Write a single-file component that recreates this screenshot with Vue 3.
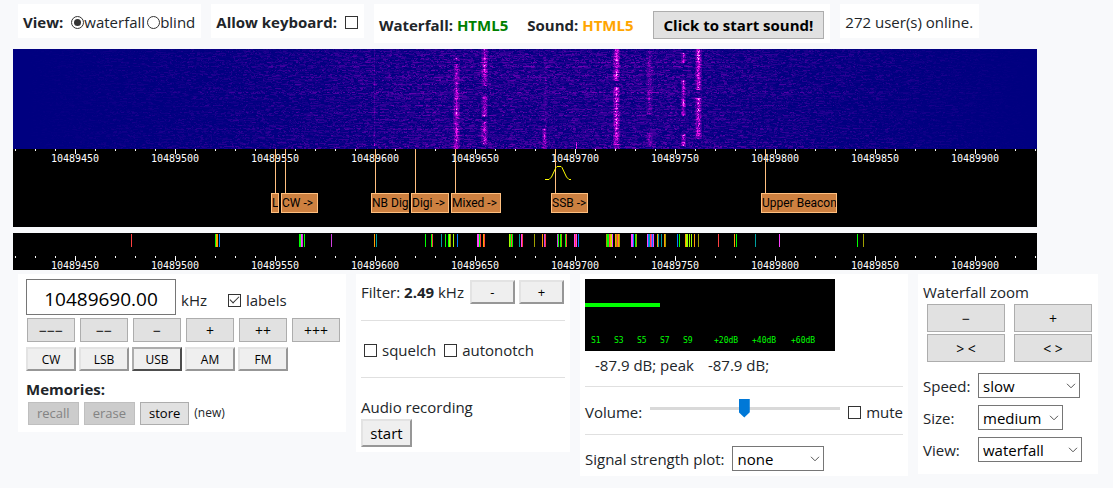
<script setup>
import { onMounted, ref } from 'vue'

const SPAN = 1024
const HEIGHT = 100
const percent = (x) => (x / SPAN) * 100 + '%'

const majorTicks = Array.from({ length: 10 }, (_, i) => ({ x: 62 + i * 100, text: String(10489450 + i * 50) }))
const minorTicks = Array.from({ length: 52 }, (_, i) => 2 + i * 20).filter((x) => x < SPAN && (x - 62) % 100 !== 0)

const bandLabels = [
  { text: 'L', x: 258, width: 8, line: 262 },
  { text: 'CW ->', x: 268, width: 37, line: 272 },
  { text: 'NB Dig', x: 358, width: 38, line: 362, cut: true },
  { text: 'Digi ->', x: 398, width: 38, line: 402 },
  { text: 'Mixed ->', x: 438, width: 50, line: 442 },
  { text: 'SSB ->', x: 538, width: 37, line: 542 },
  { text: 'Upper Beacon', x: 748, width: 76, line: 752 },
]

const palette = {
  r: '#ff4040', o: '#ffa000', g: '#00ff00', l: '#a0ff00', t: '#00a0a0',
  b: '#0080ff', m: '#ff40ff', p: '#d040e0', v: '#a0a000',
}
const listeners = (
  '118r 202g 203o 204o 206b 286g 287g 288m 289p 291g 318p 361o 363t ' +
  '412g 418g 419r 428t 432g 435g 436l 437v 440l 444b 464m 465m 466g 467r 470o 471r ' +
  '496l 497g 498r 499g 506t 508m 509r 521v 529o 531p 532r 544p 545g 547g 548v 552g 553r ' +
  '561m 562r 563m 565b 593v 594g 595g 596r 597o 598l 599m 602o 603v 604r 605o 606v ' +
  '618m 619m 620b 622g 623v 634m 635b 636t 637r 638p 639b 640m 644o 645t 648t 651o 652v ' +
  '664b 666g 672o 673l 674l 676l 678l 681o 685v 705r 721o 723g 742t 766m 844g 850v'
).split(' ').map((s) => ({ x: parseInt(s), color: palette[s.slice(-1)] }))

const meterMarks = [
  { text: 'S1', x: 6 }, { text: 'S3', x: 29 }, { text: 'S5', x: 52 }, { text: 'S7', x: 75 }, { text: 'S9', x: 98 },
  { text: '+20dB', x: 129 }, { text: '+40dB', x: 167 }, { text: '+60dB', x: 206 },
]

const signals = [
  { x: 443, width: 3, power: 0.5, spans: [[9, 12], [15, 100]] },
  { x: 471, width: 3, power: 0.55, spans: [[0, 37], [47, 68], [72, 96]] },
  { x: 531, width: 2, power: 0.5, spans: [[80, 100]] },
  { x: 532, width: 2, power: 0.12, spans: [[6, 80]] },
  { x: 563, width: 0, power: 0.6, spans: [[93, 100]] },
  { x: 361, width: 0, power: 0.14, spans: [[0, 93]] },
  { x: 361, width: 0, power: 0.7, spans: [[94, 97]] },
  { x: 603, width: 3, power: 0.66, spans: [[0, 32], [38, 100]] },
  { x: 636, width: 3, power: 0.28, spans: [[2, 66], [84, 98]] },
  { x: 670, width: 2, power: 0.6, spans: [[4, 14], [31, 67], [85, 97]] },
  { x: 685, width: 3, power: 0.7, spans: [[0, 41], [49, 90]] },
]

const modes = ['CW', 'LSB', 'USB', 'AM', 'FM']
const steps = ['−−−', '−−', '−', '+', '++', '+++']

const view = ref('waterfall')
const keyboard = ref(false)
const showLabels = ref(true)
const squelch = ref(false)
const autonotch = ref(false)
const mute = ref(false)
const mode = ref('USB')
const frequency = ref('10489690.00')
const volume = ref(49.5)
const screen = ref(null)

function generator(seed) {
  return () => {
    seed = (seed + 0x6d2b79f5) | 0
    let t = Math.imul(seed ^ (seed >>> 15), 1 | seed)
    t = (t + Math.imul(t ^ (t >>> 7), 61 | t)) ^ t
    return ((t ^ (t >>> 14)) >>> 0) / 4294967296
  }
}

function color(level) {
  const stops = [[0, 0, 128], [76, 0, 164], [170, 0, 205], [250, 30, 245], [255, 190, 255]]
  const v = Math.max(0, Math.min(0.999, level)) * 4
  const i = Math.floor(v)
  return stops[i].map((c, k) => c + (stops[i + 1][k] - c) * (v - i))
}

onMounted(() => {
  const ctx = screen.value.getContext('2d')
  const image = ctx.createImageData(SPAN, HEIGHT)
  const random = generator(7)
  for (let y = 0; y < HEIGHT; y++) {
    const row = 0.55 + random() * 0.65 + (y === 43 || y === 44 ? 0.3 : 0)
    const strength = signals.map(() => 0.5 + random() * 0.6)
    let previous = 0
    for (let x = 0; x < SPAN; x++) {
      const rise = Math.min(1, Math.max(0, (x - 10) / 400))
      const fall = Math.min(1, Math.max(0, (1020 - x) / 360))
      const floor = Math.min(rise, fall)
      const fresh = random() ** (3.6 - floor * 2.1)
      previous = random() < 0.45 ? previous : fresh
      let level = previous * row * floor * 0.31
      signals.forEach((s, i) => {
        const d = Math.abs(x - s.x)
        if (d <= s.width && s.spans.some(([a, b]) => y >= a && y < b)) {
          level += s.power * strength[i] * (1 - d / (s.width + 1)) * (0.35 + random() * 1.15)
        }
      })
      const at = (y * SPAN + x) * 4
      const [r, g, b] = color(level)
      image.data[at] = r
      image.data[at + 1] = g
      image.data[at + 2] = b
      image.data[at + 3] = 255
    }
  }
  ctx.putImageData(image, 0, 0)
})
</script>

<template>
  <div class="page">
    <header class="top">
      <div class="box">
        <b>View:</b>
        <span class="radios">
          <label><input v-model="view" type="radio" name="view" value="waterfall">waterfall</label>
          <label><input v-model="view" type="radio" name="view" value="blind">blind</label>
        </span>
      </div>
      <div class="box">
        <label class="check keyboard"><b>Allow keyboard:</b><input v-model="keyboard" type="checkbox"></label>
      </div>
      <div class="box sound">
        <b>Waterfall: <span class="ok">HTML5</span></b>
        <b>Sound: <span class="wait">HTML5</span></b>
        <button type="button" class="flat start-sound">Click to start sound!</button>
      </div>
      <div class="box">272 user(s) online.</div>
    </header>

    <main>
      <section class="spectrum">
        <canvas ref="screen" class="screen" :width="SPAN" :height="HEIGHT"></canvas>
        <div class="scale">
          <svg class="plot" viewBox="0 0 1024 78" preserveAspectRatio="none" aria-hidden="true">
            <rect v-for="x in minorTicks" :key="x" :x="x" y="0" width="1" height="2" fill="#fff" />
            <rect v-for="t in majorTicks" :key="t.x" :x="t.x" y="0" width="1" height="5" fill="#fff" />
          </svg>
          <span v-for="t in majorTicks" :key="t.x" class="digits" :style="{ left: percent(t.x) }">{{ t.text }}</span>
          <svg class="plot" viewBox="0 0 1024 78" preserveAspectRatio="none" aria-hidden="true">
            <rect v-for="l in bandLabels" :key="l.x" :x="l.line" y="0" width="1" height="44" fill="#ffc080" />
            <path d="M532 30.500H536L538.500 28L543 18.500L544 17.500H548L549 18.500L553.500 28L556 30.500H558" fill="none" stroke="#ff0" />
          </svg>
          <span
            v-for="l in bandLabels" :key="l.x" class="tag" :class="{ cut: l.cut }"
            :style="{ left: percent(l.x), width: percent(l.width) }"
          >{{ l.text }}</span>
        </div>
      </section>

      <section class="spectrum overview">
        <svg class="plot" viewBox="0 0 1024 37" preserveAspectRatio="none" aria-hidden="true">
          <rect v-for="m in listeners" :key="m.x" :x="m.x" y="1" width="1" height="13" :fill="m.color" />
          <rect v-for="x in minorTicks" :key="x" :x="x" y="23" width="1" height="2" fill="#fff" />
          <rect v-for="t in majorTicks" :key="t.x" :x="t.x" y="23" width="1" height="5" fill="#fff" />
        </svg>
        <span v-for="t in majorTicks" :key="t.x" class="digits" :style="{ left: percent(t.x) }">{{ t.text }}</span>
      </section>

      <div class="panels">
        <section class="panel tuning">
          <div class="frequency">
            <input v-model="frequency" type="text" aria-label="Frequency in kHz">
            <span>kHz</span>
            <label class="check"><input v-model="showLabels" type="checkbox">labels</label>
          </div>
          <div class="steps">
            <button v-for="s in steps" :key="s" type="button" class="flat">{{ s }}</button>
          </div>
          <div class="modes">
            <button v-for="m in modes" :key="m" type="button" class="raised" :class="{ active: m === mode }" @click="mode = m">{{ m }}</button>
          </div>
          <b class="memories-title">Memories:</b>
          <div class="memories">
            <button type="button" class="flat" disabled>recall</button>
            <button type="button" class="flat" disabled>erase</button>
            <button type="button" class="flat">store</button>
            <span>(new)</span>
          </div>
        </section>

        <section class="panel filter">
          <div class="filter-row">
            <span>Filter: <b>2.49</b> kHz</span>
            <button type="button" class="raised">-</button>
            <button type="button" class="raised">+</button>
          </div>
          <hr>
          <div class="options">
            <label class="check"><input v-model="squelch" type="checkbox">squelch</label>
            <label class="check"><input v-model="autonotch" type="checkbox">autonotch</label>
          </div>
          <hr>
          <div class="recording">
            <div>Audio recording</div>
            <button type="button" class="raised">start</button>
          </div>
        </section>

        <section class="panel signal">
          <div class="meter">
            <div class="level"></div>
            <span v-for="m in meterMarks" :key="m.text" :style="{ left: m.x + 'px' }">{{ m.text }}</span>
          </div>
          <div class="reading"><span>-87.9 dB; peak</span><span>-87.9 dB;</span></div>
          <hr>
          <div class="volume">
            <label for="volume">Volume:</label>
            <input id="volume" v-model="volume" type="range" min="0" max="100" step="0.5">
            <label class="check"><input v-model="mute" type="checkbox">mute</label>
          </div>
          <hr>
          <div class="strength">
            <label for="strength">Signal strength plot:</label>
            <span class="select none">
              <select id="strength"><option>none</option><option>slow</option><option>fast</option></select>
              <svg viewBox="0 0 10 6" aria-hidden="true"><path d="M1 .8l4 4 4-4" /></svg>
            </span>
          </div>
        </section>

        <section class="panel zoom">
          <div>Waterfall zoom</div>
          <div class="zoom-buttons">
            <button type="button" class="flat">−</button>
            <button type="button" class="flat">+</button>
            <button type="button" class="flat">&gt; &lt;</button>
            <button type="button" class="flat">&lt; &gt;</button>
          </div>
          <div class="settings">
            <label for="speed">Speed:</label>
            <span class="select slow">
              <select id="speed"><option>slow</option><option>medium</option><option>fast</option></select>
              <svg viewBox="0 0 10 6" aria-hidden="true"><path d="M1 .8l4 4 4-4" /></svg>
            </span>
            <label for="size">Size:</label>
            <span class="select medium">
              <select id="size"><option>medium</option><option>small</option><option>large</option></select>
              <svg viewBox="0 0 10 6" aria-hidden="true"><path d="M1 .8l4 4 4-4" /></svg>
            </span>
            <label for="display">View:</label>
            <span class="select wide">
              <select id="display"><option>waterfall</option><option>spectrum</option></select>
              <svg viewBox="0 0 10 6" aria-hidden="true"><path d="M1 .8l4 4 4-4" /></svg>
            </span>
          </div>
        </section>
      </div>
    </main>
  </div>
</template>

<style>
body {
  background: #f8f9fb;
}
</style>

<style scoped>
.page {
  color: #212529;
  font: 15px/24px "Open Sans", "Noto Sans", sans-serif;
  padding-bottom: 12px;
}
.page *,
.page *::before,
.page *::after {
  box-sizing: border-box;
}
button,
input,
select {
  font-family: inherit;
  color: #000;
  margin: 0;
}

.top {
  display: flex;
  align-items: flex-start;
  gap: 10px;
  height: 49px;
  padding: 4px 18px 0;
  white-space: nowrap;
}
.box {
  display: flex;
  align-items: center;
  gap: 8px;
  height: 34px;
  padding: 2px 6px 0 5px;
  background: #fff;
}
.box.sound {
  height: 39px;
  gap: 19px;
}
.ok {
  color: #008000;
}
.wait {
  color: #ffa500;
}
.radios,
.radios label {
  display: flex;
  align-items: center;
}
.radios {
  gap: 2px;
}
.check {
  display: inline-flex;
  align-items: center;
  gap: 5px;
}
.check.keyboard {
  gap: 8px;
}
input[type="checkbox"],
input[type="radio"] {
  appearance: none;
  flex: none;
  width: 13px;
  height: 13px;
  border: 1px solid #333;
  background: #fff;
  display: grid;
  place-items: center;
}
input[type="radio"] {
  border-radius: 50%;
}
input[type="radio"]:checked::before {
  content: "";
  width: 7px;
  height: 7px;
  border-radius: 50%;
  background: #333;
}
input[type="checkbox"]:checked::before {
  content: "";
  width: 9px;
  height: 5px;
  margin-bottom: 3px;
  border: solid #333;
  border-width: 0 0 1px 1px;
  transform: rotate(-45deg);
}

.flat {
  border: 1px solid #adadad;
  border-radius: 0;
  background: #e1e1e1;
  padding: 0;
}
.flat:disabled {
  background: #ccc;
  border-color: #bfbfbf;
  color: #838383;
}
.raised {
  border: 2px solid;
  border-color: #e3e3e3 #979797 #979797 #e3e3e3;
  border-radius: 0;
  background: #efefef;
  padding: 0;
}
.raised.active {
  border-color: #adadad #4d4d4d #4d4d4d #adadad;
}
.start-sound {
  height: 28px;
  padding: 0 10px;
  font-size: 15px;
  font-weight: 700;
}

.spectrum {
  position: relative;
  margin: 0 76px 6px 13px;
  background: #000;
}
.screen {
  display: block;
  width: 100%;
  height: 100px;
  image-rendering: pixelated;
}
.scale {
  position: relative;
  height: 78px;
  overflow: hidden;
}
.plot {
  position: absolute;
  inset: 0;
  width: 100%;
  height: 100%;
}
.digits {
  position: absolute;
  top: 4px;
  transform: translateX(-50%);
  color: #fff;
  font: 10px/12px "DejaVu Sans Mono", monospace;
}
.tag {
  position: absolute;
  top: 44px;
  height: 20px;
  overflow: hidden;
  border: 1px solid #ffc080;
  background: #cd8040;
  color: #000;
  font: 12px/19px Roboto, "Open Sans", sans-serif;
  white-space: nowrap;
}
.tag.cut {
  border-right: 0;
}
.overview {
  height: 37px;
  margin-bottom: 4px;
  overflow: hidden;
}
.overview .digits {
  top: 27px;
}

.panels {
  display: grid;
  grid-template-columns: 328fr 214fr 328fr 180fr;
  align-items: start;
  gap: 10px;
  padding: 0 15px 0 18px;
  white-space: nowrap;
}
.panel {
  padding: 5px;
  background: #fff;
}
hr {
  height: 1px;
  margin: 0;
  border: 0;
  background: #e0e0e0;
}

.tuning {
  padding: 5px 5px 7px 8px;
}
.frequency {
  display: flex;
  align-items: center;
  gap: 5px;
}
.frequency input[type="text"] {
  width: 150px;
  height: 36px;
  border: 1px solid #767676;
  padding: 4px 0 0;
  text-align: center;
  font-size: 19px;
}
.frequency span,
.frequency .check {
  margin-top: 6px;
}
.frequency .check {
  margin-left: 16px;
}
.steps,
.modes {
  display: flex;
  margin-top: 3px;
  padding-left: 1px;
  gap: 5px;
}
.steps button {
  width: 48px;
  height: 24px;
  font-size: 14px;
}
.modes {
  margin-top: 5px;
  padding-left: 0;
  gap: 3px;
}
.modes button {
  width: 50px;
  height: 24px;
  font-size: 12px;
}
.memories-title {
  display: block;
  margin-top: 6px;
}
.memories {
  display: flex;
  align-items: center;
  gap: 5px;
  padding-left: 2px;
  font-size: 12px;
}
.memories button {
  height: 23px;
  padding: 0 8px;
  font-size: 13px;
}

.filter-row {
  display: flex;
  align-items: center;
  gap: 4px;
  padding: 1px 0 16px;
}
.filter-row span {
  margin-right: 2px;
}
.filter-row button {
  flex: 1 1 45px;
  max-width: 45px;
  height: 24px;
  font-size: 13px;
}
.options {
  display: flex;
  gap: 8px;
  padding: 17px 3px 15px;
}
.recording {
  padding-top: 17px;
}
.recording button {
  display: block;
  width: 51px;
  height: 28px;
  font-size: 15px;
}

.meter {
  position: relative;
  width: 250px;
  height: 72px;
  padding-top: 24px;
  background: #000;
}
.level {
  width: 30%;
  height: 4px;
  background: #0f0;
}
.meter span {
  position: absolute;
  top: 57px;
  color: #0f0;
  font: 8px/10px "DejaVu Sans Mono", monospace;
}
.reading {
  display: flex;
  gap: 14px;
  padding: 2px 10px 9px;
}
.volume {
  display: flex;
  align-items: center;
  height: 47px;
  padding-top: 3px;
}
.volume input[type="range"] {
  appearance: none;
  flex: 1;
  min-width: 0;
  height: 21px;
  margin: 0 8px 8px;
  background: transparent;
}
.volume input[type="range"]::-webkit-slider-runnable-track {
  height: 3px;
  background: #d9d9d9;
}
.volume input[type="range"]::-webkit-slider-thumb {
  appearance: none;
  width: 11px;
  height: 19px;
  margin-top: -8px;
  background: #0078d7;
  clip-path: polygon(0 0, 100% 0, 100% 72%, 50% 100%, 0 72%);
}
.strength {
  display: flex;
  align-items: center;
  gap: 8px;
  padding-top: 11px;
}
.select {
  position: relative;
  display: block;
  height: 25px;
}
.select select {
  appearance: none;
  display: block;
  width: 100%;
  height: 100%;
  padding: 0 4px;
  border: 1px solid #767676;
  border-radius: 0;
  background: #fff;
  font-size: 15px;
}
.select svg {
  position: absolute;
  right: 4px;
  top: 10px;
  width: 10px;
  height: 6px;
  fill: none;
  stroke: #555;
  pointer-events: none;
}
.none {
  width: 92px;
}
.slow {
  width: 102px;
}
.medium {
  width: 85px;
}
.wide {
  width: 104px;
}

.zoom {
  padding-bottom: 12px;
}
.zoom > div:first-child {
  padding-top: 1px;
}
.zoom-buttons {
  display: grid;
  grid-template-columns: 1fr 1fr;
  gap: 2px 9px;
  padding: 0 1px 0 4px;
}
.zoom-buttons button {
  height: 28px;
  font-size: 14px;
}
.settings {
  display: grid;
  grid-template-columns: 48px auto;
  justify-content: start;
  align-items: center;
  gap: 7px;
  margin-top: 11px;
}
</style>
